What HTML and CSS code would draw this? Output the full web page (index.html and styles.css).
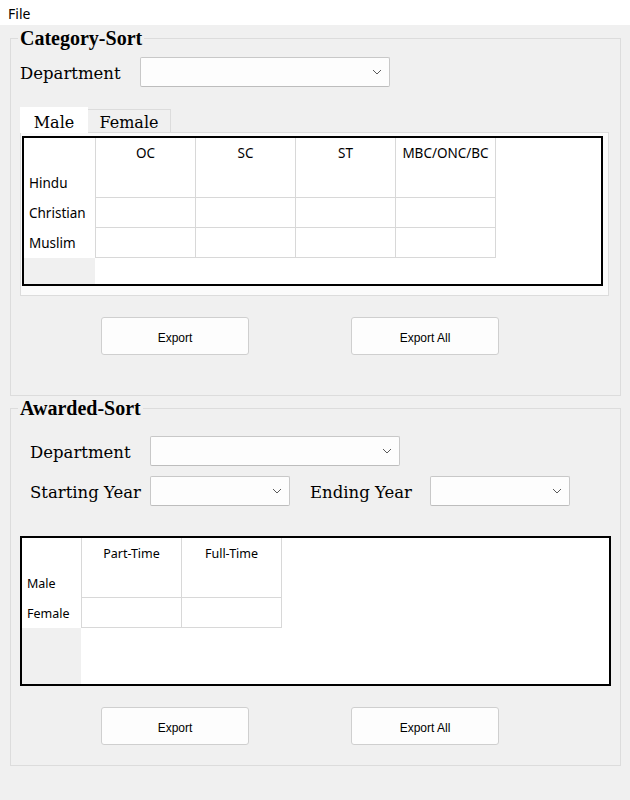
FILE: index.html
```html
<!DOCTYPE html>
<html lang="en">
<head>
<meta charset="utf-8">
<title>Sort</title>
<link rel="stylesheet" href="styles.css">
</head>
<body>
<div class="menubar"><span class="menu-item">File</span></div>
<main class="window">
  <fieldset class="group group-category">
    <legend class="group-title">Category-Sort</legend>
    <div class="field-row row-dept1">
      <span class="lbl">Department</span>
      <div class="combo combo-wide"><svg class="chev" width="10" height="6" viewBox="0 0 10 6"><polyline points="1,1 5,5 9,1" fill="none" stroke="#5a5a5a" stroke-width="1"/></svg></div>
    </div>
    <div class="tabs">
      <div class="tab-bar">
        <div class="tab tab-active">Male</div>
        <div class="tab tab-idle">Female</div>
        <div class="tab-fill"></div>
      </div>
      <div class="tab-pane">
        <div class="grid-table t1">
          <div class="corner"></div>
          <div class="hcell">OC</div>
          <div class="hcell">SC</div>
          <div class="hcell">ST</div>
          <div class="hcell last">MBC/ONC/BC</div>
          <div class="blank"></div>

          <div class="rhead">Hindu</div>
          <div class="dcell"></div><div class="dcell"></div><div class="dcell"></div><div class="dcell last"></div>
          <div class="blank"></div>

          <div class="rhead">Christian</div>
          <div class="dcell"></div><div class="dcell"></div><div class="dcell"></div><div class="dcell last"></div>
          <div class="blank"></div>

          <div class="rhead">Muslim</div>
          <div class="dcell"></div><div class="dcell"></div><div class="dcell"></div><div class="dcell last"></div>
          <div class="blank"></div>

          <div class="grey"></div>
          <div class="blank span-rest"></div>
        </div>
      </div>
    </div>
    <div class="btn-row">
      <button class="btn">Export</button>
      <button class="btn">Export All</button>
    </div>
  </fieldset>

  <fieldset class="group group-awarded">
    <legend class="group-title">Awarded-Sort</legend>
    <div class="field-row row-dept2">
      <span class="lbl">Department</span>
      <div class="combo combo-wide"><svg class="chev" width="10" height="6" viewBox="0 0 10 6"><polyline points="1,1 5,5 9,1" fill="none" stroke="#5a5a5a" stroke-width="1"/></svg></div>
    </div>
    <div class="field-row row-years">
      <span class="lbl">Starting Year</span>
      <div class="combo combo-short"><svg class="chev" width="10" height="6" viewBox="0 0 10 6"><polyline points="1,1 5,5 9,1" fill="none" stroke="#5a5a5a" stroke-width="1"/></svg></div>
      <span class="lbl lbl-end">Ending Year</span>
      <div class="combo combo-short"><svg class="chev" width="10" height="6" viewBox="0 0 10 6"><polyline points="1,1 5,5 9,1" fill="none" stroke="#5a5a5a" stroke-width="1"/></svg></div>
    </div>
    <div class="grid-table t2">
      <div class="corner"></div>
      <div class="hcell">Part-Time</div>
      <div class="hcell last">Full-Time</div>
      <div class="blank"></div>

      <div class="rhead">Male</div>
      <div class="dcell"></div><div class="dcell last"></div>
      <div class="blank"></div>

      <div class="rhead">Female</div>
      <div class="dcell"></div><div class="dcell last"></div>
      <div class="blank"></div>

      <div class="grey"></div>
      <div class="blank span-rest"></div>
    </div>
    <div class="btn-row btn-row2">
      <button class="btn">Export</button>
      <button class="btn">Export All</button>
    </div>
  </fieldset>
</main>
</body>
</html>
```
FILE: styles.css
```css
* { box-sizing: border-box; }
html, body { margin: 0; padding: 0; }
body {
  background: #f0f0f0;
  width: 630px;
  height: 800px;
  overflow: hidden;
  font-family: "Noto Sans", sans-serif;
  color: #000;
}
.menubar {
  height: 25px;
  background: #ffffff;
  display: flex;
  align-items: center;
  padding-left: 8px;
}
.menu-item { font-size: 14px; line-height: 27px; height: 25px; }

.window { padding-left: 10px; }

.group {
  width: 611px;
  margin: 0;
  padding: 0;
  border: 1px solid #dcdcdc;
  min-inline-size: 0;
}
.group-category { margin-top: 2px; padding-bottom: 40px; }
.group-awarded { margin-top: 1px; padding-bottom: 20px; }

.group-title {
  font-family: "Liberation Serif", serif;
  font-weight: bold;
  font-size: 20px;
  line-height: 22px;
  height: 22px;
  padding: 0 2px;
  margin-left: 7px;
}

.field-row {
  display: flex;
  align-items: center;
  height: 30px;
}
.row-dept1 { margin: 8px 0 0 9px; }
.row-dept2 { margin: 17px 0 0 19px; }
.row-years { margin: 10px 0 0 19px; }

.lbl {
  width: 120px;
  height: 30px;
  font-family: "DejaVu Serif", serif;
  font-size: 16.5px;
  line-height: 34px;
  white-space: nowrap;
}
.lbl-end { margin-left: 20px; }

.combo {
  height: 30px;
  background: #fdfdfd;
  border: 1px solid #c8c8c8;
  border-bottom-color: #bdbdbd;
  border-radius: 2px;
  display: flex;
  align-items: center;
  justify-content: flex-end;
  padding-right: 7px;
}
.combo-wide { width: 250px; }
.combo-short { width: 140px; }
.chev { display: block; }

.tabs { margin: 20px 0 0 9px; width: 589px; }
.tab-bar {
  display: flex;
  align-items: flex-end;
  height: 26px;
}
.tab {
  font-family: "DejaVu Serif", serif;
  font-size: 16px;
  display: flex;
  align-items: center;
  justify-content: center;
}
.tab-active {
  width: 68px;
  height: 26px;
  background: #ffffff;
  padding-top: 4px;
}
.tab-idle {
  width: 83px;
  height: 24px;
  background: #f0f0f0;
  border: 1px solid #dcdcdc;
  border-left: none;
  padding-top: 3px;
}
.tab-fill {
  flex: 1;
  height: 1px;
  background: #dcdcdc;
}
.tab-pane {
  height: 163px;
  background: #fbfbfb;
  border: 1px solid #dcdcdc;
  border-top: none;
  padding: 3px 0 0 1px;
}

.grid-table {
  border: 2px solid #000;
  background: #ffffff;
  display: grid;
  height: 150px;
}
.t1 {
  width: 581px;
  grid-template-columns: 71px 100px 100px 100px 101px 1fr;
  grid-template-rows: 30px 30px 30px 30px 1fr;
  font-size: 13.5px;
}
.t2 {
  width: 591px;
  margin: 30px 0 0 9px;
  grid-template-columns: 59px 100px 101px 1fr;
  grid-template-rows: 30px 30px 30px 1fr;
  font-size: 12.5px;
}
.hcell {
  border-left: 1px solid #d8d8d8;
  display: flex;
  align-items: center;
  justify-content: center;
  white-space: nowrap;
}
.dcell {
  border-left: 1px solid #d8d8d8;
  border-bottom: 1px solid #d8d8d8;
}
.hcell.last, .dcell.last { border-right: 1px solid #d8d8d8; }
.rhead {
  display: flex;
  align-items: center;
  white-space: nowrap;
}
.t1 .rhead { padding-left: 5px; }
.t2 .rhead { padding-left: 5px; }
.grey { background: #f0f0f0; }
.span-rest { grid-column: 2 / -1; }

.btn-row {
  display: flex;
  gap: 102px;
  margin: 21px 0 0 90px;
}
.btn {
  width: 148px;
  height: 38px;
  background: #fdfdfd;
  border: 1px solid #cfcfcf;
  border-radius: 3px;
  font-family: "Liberation Sans", sans-serif;
  font-size: 12px;
  color: #000;
  padding: 3px 0 0;
}
```
